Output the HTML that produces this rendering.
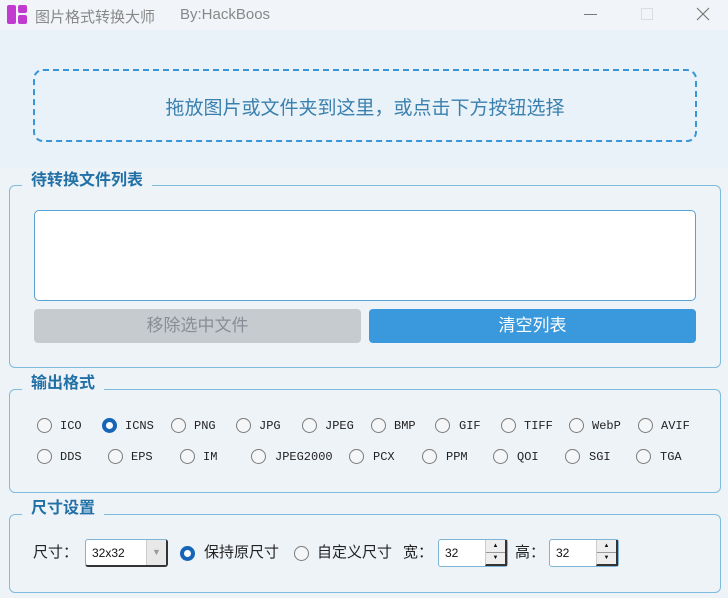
<!DOCTYPE html>
<html><head><meta charset="utf-8"><style>
*{margin:0;padding:0;box-sizing:border-box}
body{width:728px;height:598px;overflow:hidden;background:#eef3f8;font-family:"Liberation Sans","Noto Sans CJK SC",sans-serif;position:relative}
.a{position:absolute}
.grp{position:absolute;border:1.5px solid #7fbbdc;border-radius:6px}
.gt{position:absolute;background:#eef3f8;color:#2170a6;font-weight:bold;font-size:16px;padding:0 9px;line-height:18px}
.r{position:absolute;width:15px;height:15px;border:1.5px solid #7a7a7a;border-radius:50%;background:#f4f6f8}
.r.on{border:4px solid #1565b8;background:#fff}
.l{position:absolute;font-family:"Liberation Mono",monospace;font-size:12px;color:#222;line-height:14px}
.cn{position:absolute;font-size:15px;color:#222;line-height:16px}
.spin{position:absolute;height:28px;background:#fff;border:1.5px solid #7db4d8;border-radius:3px;font-size:12px;padding:6px 0 0 6px;color:#111}
.sb{position:absolute;right:0;top:0;width:22px;height:26px;border-left:1px solid #ccc;border-right:2px solid #333;border-bottom:2px solid #333;background:#eee}
</style></head><body>
<!-- title bar -->
<div class="a" style="left:0;top:0;width:728px;height:30px;background:#f1f4f8"></div>
<div class="a" style="left:7px;top:5px;width:9px;height:19px;background:#c23bd0;border-radius:2px"></div>
<div class="a" style="left:18px;top:5px;width:9px;height:8px;background:#c23bd0;border-radius:2px"></div>
<div class="a" style="left:18px;top:15px;width:9px;height:9px;background:#c23bd0;border-radius:2px"></div>
<div class="a" style="left:35px;top:6px;font-size:15px;color:#888">图片格式转换大师</div>
<div class="a" style="left:180px;top:6px;font-size:15px;color:#888">By:HackBoos</div>
<div class="a" style="left:584px;top:14px;width:13px;height:1px;background:#777"></div>
<div class="a" style="left:641px;top:8px;width:12px;height:12px;border:1px solid #ddd"></div>
<svg class="a" style="left:696px;top:7px" width="14" height="14"><path d="M1 1L13 13M13 1L1 13" stroke="#777" stroke-width="1.2"/></svg>
<!-- drop area -->
<div class="a" style="left:0;top:30px;width:728px;height:138px;background:#e9f2f8"></div>
<div class="a" style="left:33px;top:69px;width:664px;height:73px;border:2.5px dashed #3a95d6;border-radius:10px"></div>
<div class="a" style="left:33px;top:93px;width:664px;text-align:center;font-size:19px;color:#3a80ae">拖放图片或文件夹到这里，或点击下方按钮选择</div>
<!-- group 1 -->
<div class="grp" style="left:9px;top:185px;width:712px;height:183px"></div>
<div class="gt" style="left:22px;top:172px">待转换文件列表</div>
<div class="a" style="left:34px;top:210px;width:662px;height:91px;background:#fff;border:1.5px solid #5aa2d4;border-radius:5px"></div>
<div class="a" style="left:34px;top:309px;width:327px;height:34px;background:#c6cbd0;border-radius:4px;text-align:center;line-height:34px;font-size:17px;color:#888e96">移除选中文件</div>
<div class="a" style="left:369px;top:309px;width:327px;height:34px;background:#3a99dd;border-radius:4px;text-align:center;line-height:34px;font-size:17px;color:#fff">清空列表</div>
<!-- group 2 -->
<div class="grp" style="left:9px;top:389px;width:712px;height:104px"></div>
<div class="gt" style="left:22px;top:375px">输出格式</div>
<div class="r" style="left:37px;top:418px"></div><div class="l" style="left:60px;top:419px">ICO</div>
<div class="r on" style="left:102px;top:418px"></div><div class="l" style="left:125px;top:419px">ICNS</div>
<div class="r" style="left:171px;top:418px"></div><div class="l" style="left:194px;top:419px">PNG</div>
<div class="r" style="left:236px;top:418px"></div><div class="l" style="left:259px;top:419px">JPG</div>
<div class="r" style="left:302px;top:418px"></div><div class="l" style="left:325px;top:419px">JPEG</div>
<div class="r" style="left:371px;top:418px"></div><div class="l" style="left:394px;top:419px">BMP</div>
<div class="r" style="left:435px;top:418px"></div><div class="l" style="left:459px;top:419px">GIF</div>
<div class="r" style="left:501px;top:418px"></div><div class="l" style="left:524px;top:419px">TIFF</div>
<div class="r" style="left:569px;top:418px"></div><div class="l" style="left:592px;top:419px">WebP</div>
<div class="r" style="left:638px;top:418px"></div><div class="l" style="left:661px;top:419px">AVIF</div>
<div class="r" style="left:37px;top:449px"></div><div class="l" style="left:60px;top:450px">DDS</div>
<div class="r" style="left:108px;top:449px"></div><div class="l" style="left:131px;top:450px">EPS</div>
<div class="r" style="left:180px;top:449px"></div><div class="l" style="left:203px;top:450px">IM</div>
<div class="r" style="left:251px;top:449px"></div><div class="l" style="left:275px;top:450px">JPEG2000</div>
<div class="r" style="left:349px;top:449px"></div><div class="l" style="left:373px;top:450px">PCX</div>
<div class="r" style="left:422px;top:449px"></div><div class="l" style="left:446px;top:450px">PPM</div>
<div class="r" style="left:493px;top:449px"></div><div class="l" style="left:517px;top:450px">QOI</div>
<div class="r" style="left:565px;top:449px"></div><div class="l" style="left:589px;top:450px">SGI</div>
<div class="r" style="left:636px;top:449px"></div><div class="l" style="left:660px;top:450px">TGA</div>
<!-- group 3 -->
<div class="grp" style="left:9px;top:514px;width:712px;height:79px"></div>
<div class="gt" style="left:22px;top:500px">尺寸设置</div>
<div class="cn" style="left:33px;top:545px">尺寸：</div>
<div class="spin" style="left:85px;top:539px;width:83px;border-right:2px solid #333;border-bottom:2px solid #333">32x32<div class="a" style="right:0;top:0;width:20px;height:25px;background:#e8e8e8;border-left:1px solid #ccc;color:#999;font-size:9px;text-align:center;line-height:25px">▼</div></div>
<div class="r on" style="left:180px;top:546px"></div>
<div class="cn" style="left:204px;top:545px">保持原尺寸</div>
<div class="r" style="left:294px;top:546px"></div>
<div class="cn" style="left:317px;top:545px">自定义尺寸</div>
<div class="cn" style="left:403px;top:545px">宽：</div>
<div class="spin" style="left:438px;top:539px;width:70px">32<div class="sb"><div style="font-size:6px;text-align:center;line-height:12px;border-bottom:1px solid #999">▲</div><div style="font-size:6px;text-align:center;line-height:11px">▼</div></div></div>
<div class="cn" style="left:515px;top:545px">高：</div>
<div class="spin" style="left:549px;top:539px;width:70px">32<div class="sb"><div style="font-size:6px;text-align:center;line-height:12px;border-bottom:1px solid #999">▲</div><div style="font-size:6px;text-align:center;line-height:11px">▼</div></div></div>
</body></html>
